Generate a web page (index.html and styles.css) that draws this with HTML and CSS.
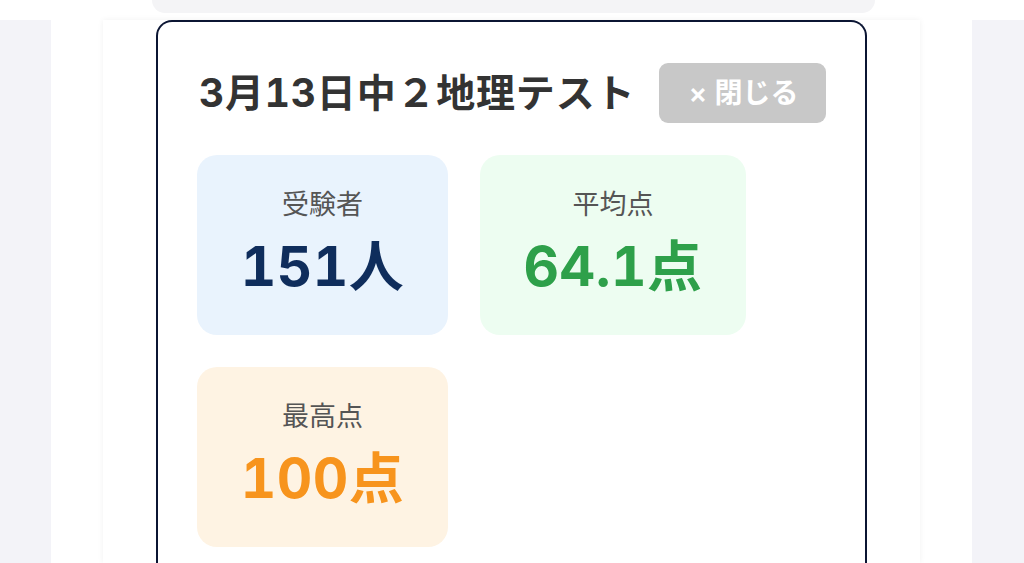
FILE: index.html
```html
<!DOCTYPE html>
<html lang="ja">
<head>
<meta charset="utf-8">
<title>3月13日中２地理テスト</title>
<link rel="stylesheet" href="styles.css">
</head>
<body>
<div class="top">
  <div class="prev-card"></div>
</div>
<div class="page">
  <div class="side"></div>
  <div class="main">
    <div class="panel">
      <section class="result-card">
        <header class="result-head">
          <h1 class="result-title">3月13日中２地理テスト</h1>
          <button class="close-btn" type="button">× 閉じる</button>
        </header>
        <div class="stats">
          <div class="stat stat-blue">
            <div class="stat-label">受験者</div>
            <div class="stat-value">151人</div>
          </div>
          <div class="stat stat-green">
            <div class="stat-label">平均点</div>
            <div class="stat-value">64.1点</div>
          </div>
          <div class="stat stat-orange">
            <div class="stat-label">最高点</div>
            <div class="stat-value">100点</div>
          </div>
        </div>
      </section>
    </div>
  </div>
  <div class="side"></div>
</div>
</body>
</html>
```
FILE: styles.css
```css
* { box-sizing: border-box; }
html, body {
  margin: 0;
  padding: 0;
  background: #ffffff;
  height: 100%;
  overflow: hidden;
  font-family: "Inter", "Noto Sans CJK JP", sans-serif;
}
.top {
  height: 20px;
  padding: 0 149px 0 152px;
}
.prev-card {
  height: 13px;
  background: #f4f4f6;
  border-radius: 0 0 26px 26px;
}
.page {
  display: flex;
  height: 543px;
}
.side {
  width: 51px;
  background: #f3f3f8;
  flex: none;
}
.side:last-child { width: 52px; }
.main {
  flex: 1;
  padding: 0 52px;
  background: #ffffff;
}
.panel {
  height: 100%;
  background: #ffffff;
  box-shadow: 0 0 6px rgba(0, 0, 0, 0.06);
  padding: 0 53px;
}
.result-card {
  height: 543px;
  border: 2px solid #0b1533;
  border-bottom: none;
  border-radius: 16px 16px 0 0;
  padding: 41px 39px 0 39px;
}
.result-head {
  display: flex;
  align-items: center;
  justify-content: space-between;
  height: 60px;
}
.result-title {
  margin: 0;
  font-size: 39px;
  font-weight: 700;
  color: #333333;
  line-height: 60px;
  padding-left: 2px;
  letter-spacing: 0.8px;
  font-variant-numeric: tabular-nums;
}
.close-btn {
  height: 60px;
  width: 167px;
  border: none;
  border-radius: 9px;
  background: #c8c8c8;
  color: #ffffff;
  font-family: inherit;
  font-size: 28px;
  font-weight: 600;
  padding: 0 0 0 2px;
  line-height: 60px;
}
.stats {
  display: flex;
  flex-wrap: wrap;
  gap: 32px;
  margin-top: 32px;
  padding-right: 40px;
}
.stat {
  height: 180px;
  border-radius: 20px;
  display: flex;
  flex-direction: column;
  align-items: center;
  padding: 31px 40px 0;
}
.stat-label {
  font-size: 27px;
  line-height: 38px;
  color: #555555;
}
.stat-value {
  margin-top: 10px;
  font-size: 55px;
  line-height: 64px;
  font-weight: 700;
  font-variant-numeric: tabular-nums;
  letter-spacing: 0.5px;
}
.stat-blue { background: #e9f3fd; min-width: 251px; }
.stat-blue .stat-value { color: #0f2d5c; }
.stat-green { background: #edfdf1; min-width: 266px; }
.stat-green .stat-value { color: #2ea04a; }
.stat-orange { background: #fef3e3; min-width: 251px; }
.stat-orange .stat-value { color: #f7941d; }
```
